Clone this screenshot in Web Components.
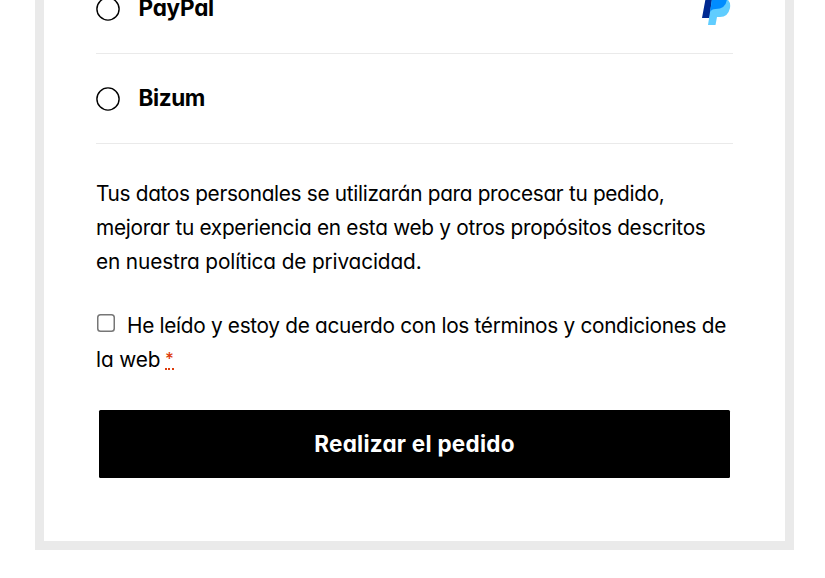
<!DOCTYPE html>
<html lang="es">
<head>
<meta charset="utf-8">
<title>Realizar el pedido</title>
<style>
body{margin:0;background:#fff;color:#000;font-family:Inter,"Open Sans",sans-serif;font-feature-settings:"cv11";overflow:hidden}
</style>
</head>
<body>
<checkout-panel>
  <payment-option label="PayPal" fit="75.5"><paypal-mark slot="icon"></paypal-mark></payment-option>
  <payment-option label="Bizum" fit="66.5"></payment-option>
  <privacy-text></privacy-text>
  <terms-check></terms-check>
  <order-button></order-button>
</checkout-panel>
<script>
const define = (name, html, init) => customElements.define(name, class extends HTMLElement {
  connectedCallback() {
    if (this.shadowRoot) return;
    this.attachShadow({mode: 'open'}).innerHTML = html;
    if (init) init(this, this.shadowRoot);
  }
});

/* One line of text whose tracking is adjusted to the width in its w attribute. */
define('fit-line', `<style>:host{display:inline-block;white-space:nowrap}</style><span></span>`, (el, root) => {
  const span = root.querySelector('span');
  span.textContent = el.getAttribute('text');
  const n = span.textContent.length;
  const natural = span.getBoundingClientRect().width;
  if (natural) span.style.letterSpacing = ((+el.getAttribute('w') - natural) / n).toFixed(4) + 'px';
});

define('checkout-panel', `<style>
:host{display:flex;flex-direction:column;box-sizing:border-box;width:759px;height:550px;margin-left:35px;padding:0 52px;border:solid #eaeaea;border-width:0 9px 9px;overflow:hidden}
.options{margin-top:-36px;flex:none}
</style><div class="options"><slot></slot></div>`);

define('payment-option', `<style>
:host{display:flex;align-items:center;box-sizing:border-box;height:90px;border-bottom:1px solid #eaeaea;font-size:22.5px;font-weight:700;line-height:24px}
.radio{display:block;width:24px;height:24px;margin:1px 18.5px 0 0}
.label{flex:1;margin-top:-2px}
</style><svg class="radio" viewBox="0 0 24 24"><circle cx="12" cy="12" r="11.1" fill="none" stroke="#000" stroke-width="1.4"/></svg><span class="label"></span><slot name="icon"></slot>`, (el, root) => {
  root.querySelector('.label').innerHTML = `<fit-line text="${el.getAttribute('label')}" w="${el.getAttribute('fit')}"></fit-line>`;
});

define('paypal-mark', `<style>:host{display:block;width:32px;height:34px;margin-top:-1px}svg{display:block}</style>
<svg width="32" height="34" viewBox="0 0 32 34">
<path d="M6 0H18Q27 1 26 9Q24 19 14 19H10L8.5 27H1Z" fill="#002991"/>
<path d="M11 8H26Q30 11 29 17Q27 26 19 26H16L14.5 34H7Z" fill="#60cdff"/>
<path d="M11 8H26Q25 18 14.5 18Q10.5 18 9.2 21Z" fill="#008cff"/>
</svg>`);

define('privacy-text', `<style>:host{display:block;margin-top:33px;font-size:20.8px;line-height:34px}div{height:34px}</style>
<div><fit-line text="Tus datos personales se utilizarán para procesar tu pedido," w="568.5"></fit-line></div>
<div><fit-line text="mejorar tu experiencia en esta web y otros propósitos descritos" w="609.5"></fit-line></div>
<div><fit-line text="en nuestra política de privacidad." w="325.5"></fit-line></div>`);

define('terms-check', `<style>
:host{display:block;margin-top:30px;font-size:20.8px;line-height:34px}
div{display:flex;height:34px}
.box{box-sizing:border-box;width:18px;height:18px;margin:5px 12px 0 1px;flex:none}
.req{color:#dd3c0c;font-size:17px;font-weight:500;line-height:32px;margin-left:4.5px;width:9px;height:27px;box-sizing:border-box;border-bottom:2px dotted #dd3c0c}
</style>
<div><svg class="box" viewBox="0 0 18 18"><rect x=".75" y=".75" width="16.5" height="16.5" rx="2.8" fill="#fff" stroke="#767676" stroke-width="1.5"/></svg><fit-line text="He leído y estoy de acuerdo con los términos y condiciones de" w="599"></fit-line></div>
<div><fit-line text="la web" w="64.5"></fit-line><span class="req">*</span></div>`);

define('order-button', `<style>
:host{display:block;margin:33px 3px 0}
button{display:flex;align-items:center;justify-content:center;width:100%;height:68px;padding:0;border:0;border-radius:1.5px;background:#000;color:#fff;font:700 22.5px/34px Inter,sans-serif;font-feature-settings:"cv11"}
</style><button type="button"><fit-line text="Realizar el pedido" w="200.5"></fit-line></button>`);
</script>
</body>
</html>
